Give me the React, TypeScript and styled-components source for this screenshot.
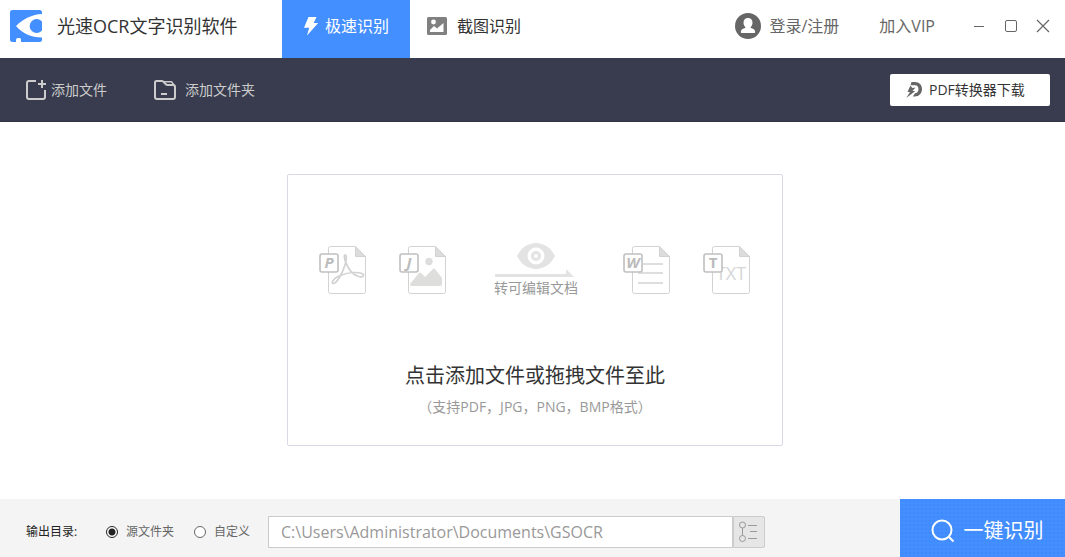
import React, { useState } from 'react';
import styled, { createGlobalStyle, css } from 'styled-components';

const GlobalStyle = createGlobalStyle`
  *, *::before, *::after { box-sizing: border-box; }
  body {
    margin: 0;
    background: #fff;
    color: #333;
    font-family: 'Open Sans', 'Noto Sans CJK SC', sans-serif;
    font-size: 14px;
    line-height: 20px;
  }
  button, input { font: inherit; color: inherit; }
  button { border: 0; padding: 0; background: none; cursor: pointer; }
  svg { display: block; flex: none; }
`;

const Window = styled.div`
  display: flex;
  flex-direction: column;
  min-height: 100vh;
`;

const Header = styled.header`
  display: flex;
  height: 58px;
  white-space: nowrap;
`;

const Brand = styled.h1`
  display: flex;
  align-items: center;
  gap: 15px;
  width: 282px;
  margin: 0;
  padding: 0 0 6px 10px;
  font-size: 18px;
  font-weight: 400;
  line-height: 24px;
`;

const Tab = styled.button<{ $active?: boolean }>`
  display: flex;
  align-items: center;
  justify-content: center;
  gap: ${p => (p.$active ? 6 : 10)}px;
  width: 128px;
  padding-bottom: 6px;
  font-size: 16px;
  background: ${p => (p.$active ? '#448fff' : 'transparent')};
  color: ${p => (p.$active ? '#fff' : '#333')};
`;

const Account = styled.nav`
  display: flex;
  align-items: center;
  gap: 40px;
  margin-left: auto;
  padding: 0 6px 6px 0;
`;

const AccountLink = styled.a`
  display: flex;
  align-items: center;
  gap: 8px;
  font-size: 16px;
  color: #666;
  text-decoration: none;
`;

const WindowControls = styled.div`
  display: flex;
  margin-left: -12px;
`;

const ControlButton = styled.button`
  display: flex;
  align-items: center;
  justify-content: center;
  width: 32px;
  height: 32px;
  color: #666;
`;

const Toolbar = styled.div`
  display: flex;
  align-items: center;
  gap: 47px;
  height: 64px;
  padding: 0 15px 0 25px;
  background: #383c4e;
  border-bottom: 1px solid #303444;
  white-space: nowrap;
`;

const ToolButton = styled.button<{ $gap: number }>`
  display: flex;
  align-items: center;
  gap: ${p => p.$gap}px;
  color: #ccc;
`;

const DownloadLink = styled.a`
  display: flex;
  align-items: center;
  gap: 7px;
  width: 160px;
  height: 32px;
  margin-left: auto;
  padding-left: 16px;
  border-radius: 2px;
  background: #fff;
  color: #333;
  text-decoration: none;
`;

const Main = styled.main`
  display: flex;
  flex: 1;
  align-items: center;
  justify-content: center;
  padding: 40px 0 42px 5px;
`;

const DropZone = styled.button`
  display: flex;
  flex-direction: column;
  align-items: center;
  width: 496px;
  padding: 70px 24px 28px;
  border: 1px solid #d9d9e8;
  border-radius: 2px;
`;

const Formats = styled.span`
  display: flex;
  gap: 32px;
`;

const Convert = styled.span`
  display: flex;
  flex-direction: column;
  align-items: center;
  width: 112px;
  margin-top: -3px;
  padding-left: 2px;
  color: #999;
`;

const DropTitle = styled.span`
  margin-top: 64px;
  font-size: 20px;
  line-height: 28px;
`;

const DropHint = styled.span`
  margin-top: 7px;
  color: #999;
`;

const Footer = styled.footer`
  display: flex;
  align-items: center;
  height: 58px;
  padding-left: 26px;
  background: #f4f4f4;
  font-size: 12px;
  white-space: nowrap;
`;

const OutputOptions = styled.fieldset`
  display: flex;
  align-items: center;
  gap: 20px;
  width: 242px;
  margin: 0;
  padding: 8px 0 0;
  border: 0;
`;

const OutputLabel = styled.span`
  width: 60px;
  color: #222;
`;

const RadioLabel = styled.label`
  display: flex;
  align-items: center;
  gap: 8px;
  color: #666;
`;

const Radio = styled.input`
  appearance: none;
  width: 12px;
  height: 12px;
  margin: 0;
  border: 1px solid #666;
  border-radius: 50%;
  background: #fff;
  &:checked {
    border-color: #222;
    background: radial-gradient(circle, #222 3px, #fff 4px);
  }
`;

const PathField = styled.div`
  display: flex;
  flex: 1;
  margin: 8px 135px 0 0;
`;

const boxed = css`
  height: 32px;
  border: 1px solid #ccc;
`;

const PathInput = styled.input`
  ${boxed}
  flex: 1;
  min-width: 0;
  padding: 0 12px;
  background: #fff;
  color: #999;
  font-size: 16px;
`;

const BrowseButton = styled.button`
  ${boxed}
  display: flex;
  align-items: center;
  justify-content: center;
  width: 32px;
  padding-right: 2px;
  border-radius: 0 2px 2px 0;
  background: #e6e6e6;
`;

const RecognizeButton = styled.button`
  display: flex;
  align-items: center;
  justify-content: center;
  align-self: stretch;
  gap: 9px;
  width: 165px;
  padding: 6px 0 0 9px;
  background: radial-gradient(circle, #3f89fa 1px, #448fff 1px) 0 0 / 4px 4px;
  color: #fff;
  font-size: 20px;
`;

const Logo = () => (
  <svg width="32" height="32" viewBox="0 0 32 32" aria-hidden="true">
    <path fill="#448fff" d="M2.500 0h27A2.500 2.500 0 0 1 32 2.500V4C22 4.500 13 9 6 16c6 7 15 11.500 26 11.500v2a2.500 2.500 0 0 1-2.500 2.500H11v-3a2 2 0 0 0-2-1H8a2 2 0 0 0-2 2v2H2.500A2.500 2.500 0 0 1 0 29.500v-27A2.500 2.500 0 0 1 2.500 0z" />
    <path fill="#448fff" d="M32 11.500a7 7 0 1 0 0 9z" />
  </svg>
);

const BoltIcon = () => (
  <svg width="16" height="20" viewBox="0 0 16 20" aria-hidden="true">
    <path fill="#fff" d="M5.500 1h8L10.700 7H15.200L4 19.500 6.200 11.800H1z" />
  </svg>
);

const PictureIcon = () => (
  <svg width="20" height="18" viewBox="0 0 20 18" aria-hidden="true">
    <rect width="20" height="18" rx="1.500" fill="#808080" />
    <circle cx="6.500" cy="5" r="2.400" fill="#fff" />
    <path fill="#fff" d="M3 15V13l4-4 3 2.500L16.500 6v9z" />
  </svg>
);

const UserIcon = () => (
  <svg width="26" height="26" viewBox="0 0 26 26" aria-hidden="true">
    <circle cx="13" cy="13" r="13" fill="#666" />
    <path fill="#fff" d="M13 5c2.800 0 4.500 2 4.500 4.700 0 1.800-.7 3.300-1.800 4.200v1c2.500.7 4.500 1.600 4.500 3.800 0 1-.6 1.300-1.500 1.300H7.300c-.9 0-1.500-.3-1.500-1.300 0-2.200 2-3.100 4.500-3.800v-1c-1.100-.9-1.800-2.400-1.800-4.200C8.500 7 10.200 5 13 5z" />
  </svg>
);

const AddFileIcon = () => (
  <svg width="22" height="22" viewBox="0 0 22 22" fill="none" stroke="#ccc" strokeWidth="2" aria-hidden="true">
    <path d="M11 2H4a2 2 0 0 0-2 2v14a2 2 0 0 0 2 2h14a2 2 0 0 0 2-2v-7M17 1v8M13 5h8" />
  </svg>
);

const AddFolderIcon = () => (
  <svg width="22" height="22" viewBox="0 0 22 22" fill="none" stroke="#ccc" strokeWidth="2" strokeLinejoin="round" aria-hidden="true">
    <path d="M1 3.500A1.500 1.500 0 0 1 2.500 2H8c2 0 3 4 5.500 4H19a2 2 0 0 1 2 2v10a2 2 0 0 1-2 2H3a2 2 0 0 1-2-2zM7 15h6" />
    <path strokeWidth="1.500" d="M9 2.800h8.500L20 6" />
  </svg>
);

const ConverterIcon = () => (
  <svg width="16" height="16" viewBox="0 0 16 16" aria-hidden="true">
    <path fill="#666" d="M5.500 0H9c4.300 0 7 3 7 7s-2.700 7.500-7.500 7.500H6.800L9 11.300c2.200-.2 3.500-1.900 3.500-4.100 0-2.300-1.400-3.900-3.700-3.900H4.500z" />
    <path fill="#666" d="M4.300 3.800 1.500 10H4L.3 16l9-7H6.500L9.500 5.500 6.500 6z" />
  </svg>
);

const BrowseIcon = () => (
  <svg width="20" height="22" viewBox="0 0 20 22" fill="none" stroke="#999" aria-hidden="true">
    <circle cx="4.500" cy="4" r="3" />
    <circle cx="4.500" cy="17.500" r="3" />
    <path d="M4.500 7v7.500M10 4.500h9M12 10.500h7M10 17.500h9" />
  </svg>
);

const SearchIcon = () => (
  <svg width="24" height="24" viewBox="0 0 24 24" fill="none" stroke="#fff" strokeWidth="2" aria-hidden="true">
    <circle cx="11" cy="11" r="9.500" />
    <path d="M17.500 17.500 22.500 22.500" />
  </svg>
);

const EyeIcon = () => (
  <svg width="82" height="36" viewBox="0 0 82 36" aria-hidden="true">
    <path fill="#e3e3e3" fillRule="evenodd" d="M22 14C26 6 33 1 41 1s15 5 19 13C56 22 49 27 41 27S26 22 22 14zm10.500 0a8.500 8.500 0 1 0 17 0 8.500 8.500 0 1 0-17 0z" />
    <path fill="#e3e3e3" fillRule="evenodd" d="M36 14a5 5 0 1 0 10 0 5 5 0 1 0-10 0zm3 0a2 2 0 1 1 4 0 2 2 0 1 1-4 0z" />
    <path fill="#e3e3e3" d="M0 32h71v-5l8 8H0z" />
  </svg>
);

const BadgeLetter = styled.text<{ $italic?: boolean }>`
  font: 700 15px 'Open Sans', sans-serif;
  font-style: ${p => (p.$italic ? 'italic' : 'normal')};
  fill: #bbb;
`;

const TxtLabel = styled.text`
  font: 400 18px 'Open Sans', sans-serif;
  fill: #d6d6d6;
`;

type DocProps = { letter: string; italic?: boolean; children: React.ReactNode };

const DocIcon = ({ letter, italic, children }: DocProps) => (
  <svg width="48" height="50" viewBox="0 0 48 50" aria-hidden="true">
    <path fill="#fff" stroke="#d2d2d2" d="M11.500 1.500h25l10 10v35a2 2 0 0 1-2 2h-33a2 2 0 0 1-2-2v-43a2 2 0 0 1 2-2z" />
    <path fill="#dcdcdc" stroke="#d2d2d2" d="M36.500 1.500v10h10z" />
    {children}
    <rect x="1" y="9" width="18" height="18" rx="2" fill="#fff" stroke="#c0c0c0" strokeWidth="1.600" />
    <BadgeLetter $italic={italic} x="10" y="23" textAnchor="middle">{letter}</BadgeLetter>
  </svg>
);

export default function App() {
  const [target, setTarget] = useState('source');
  return (
    <Window>
      <GlobalStyle />
      <Header>
        <Brand><Logo />光速OCR文字识别软件</Brand>
        <Tab $active><BoltIcon />极速识别</Tab>
        <Tab><PictureIcon />截图识别</Tab>
        <Account>
          <AccountLink href="#login"><UserIcon />登录/注册</AccountLink>
          <AccountLink href="#vip">加入VIP</AccountLink>
          <WindowControls>
            <ControlButton aria-label="最小化">
              <svg width="14" height="14" stroke="currentColor"><path d="M2 7.500h10" /></svg>
            </ControlButton>
            <ControlButton aria-label="最大化">
              <svg width="14" height="14" fill="none" stroke="currentColor"><rect x="1.500" y="1.500" width="11" height="11" rx="1.500" /></svg>
            </ControlButton>
            <ControlButton aria-label="关闭">
              <svg width="14" height="14" stroke="currentColor" strokeWidth="1.200"><path d="M1 1l12 12M13 1 1 13" /></svg>
            </ControlButton>
          </WindowControls>
        </Account>
      </Header>
      <Toolbar>
        <ToolButton $gap={4}><AddFileIcon />添加文件</ToolButton>
        <ToolButton $gap={9}><AddFolderIcon />添加文件夹</ToolButton>
        <DownloadLink href="#converter"><ConverterIcon />PDF转换器下载</DownloadLink>
      </Toolbar>
      <Main>
        <DropZone>
          <Formats>
            <DocIcon letter="P" italic>
              <path fill="none" stroke="#d2d2d2" strokeWidth="1.700" d="M26 10c2 0 1.500 5 0 10-2.500 8-8.500 19-12 18.500-2-.5 0-4 4-6.500 6-3 12-4.500 18-4.500 4.500 0 9 1 8.500 3-.5 2.500-6 1.500-10.500-2C28 23.500 23.500 10 26 10z" />
            </DocIcon>
            <DocIcon letter="J" italic>
              <circle cx="30" cy="16.500" r="3.700" fill="#ddd" />
              <path fill="#dededc" d="M12.500 41q-1.500 0-1.500-2l9-11q1-1 2 0l4 4 8-8q1-1 2 0l7 9v6q0 2-2 2z" />
            </DocIcon>
            <Convert><EyeIcon />转可编辑文档</Convert>
            <DocIcon letter="W" italic>
              <path stroke="#dedede" strokeWidth="2" d="M20 19h20M15 28h25M15 38h25" />
            </DocIcon>
            <DocIcon letter="T">
              <TxtLabel x="28" y="35" textAnchor="middle">TXT</TxtLabel>
            </DocIcon>
          </Formats>
          <DropTitle>点击添加文件或拖拽文件至此</DropTitle>
          <DropHint>（支持PDF，JPG，PNG，BMP格式）</DropHint>
        </DropZone>
      </Main>
      <Footer>
        <OutputOptions>
          <OutputLabel>输出目录:</OutputLabel>
          <RadioLabel>
            <Radio type="radio" name="target" checked={target === 'source'} onChange={() => setTarget('source')} />
            源文件夹
          </RadioLabel>
          <RadioLabel>
            <Radio type="radio" name="target" checked={target === 'custom'} onChange={() => setTarget('custom')} />
            自定义
          </RadioLabel>
        </OutputOptions>
        <PathField>
          <PathInput aria-label="输出目录" defaultValue="C:\Users\Administrator\Documents\GSOCR" />
          <BrowseButton aria-label="浏览"><BrowseIcon /></BrowseButton>
        </PathField>
        <RecognizeButton><SearchIcon />一键识别</RecognizeButton>
      </Footer>
    </Window>
  );
}
